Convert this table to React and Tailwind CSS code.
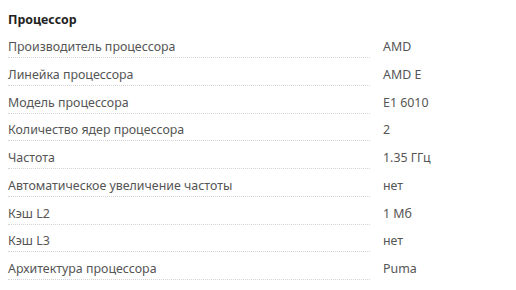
import React from 'react';

const specs = [
  ['Производитель процессора', 'AMD'],
  ['Линейка процессора', 'AMD E'],
  ['Модель процессора', 'E1 6010'],
  ['Количество ядер процессора', '2'],
  ['Частота', '1.35 ГГц'],
  ['Автоматическое увеличение частоты', 'нет'],
  ['Кэш L2', '1 Мб'],
  ['Кэш L3', 'нет'],
  ['Архитектура процессора', 'Puma'],
];

export default function App() {
  return (
    <div className="w-[516px] h-[290px] bg-white px-2 font-['Noto_Sans',sans-serif] text-[12.4px] overflow-hidden">
      <div className="h-[30.25px] pt-[12px] leading-[16px] font-bold text-[#222]">Процессор</div>
      {specs.map(([label, value]) => (
        <div key={label} className="flex h-[27.75px]">
          <div className="w-[362px] flex items-end pb-[2px] leading-[16px] text-[#555] border-b border-dotted border-[#d4d4d4]">
            {label}
          </div>
          <div className="flex items-end pb-[3px] pl-[13px] leading-[16px] text-[#555]">{value}</div>
        </div>
      ))}
    </div>
  );
}
